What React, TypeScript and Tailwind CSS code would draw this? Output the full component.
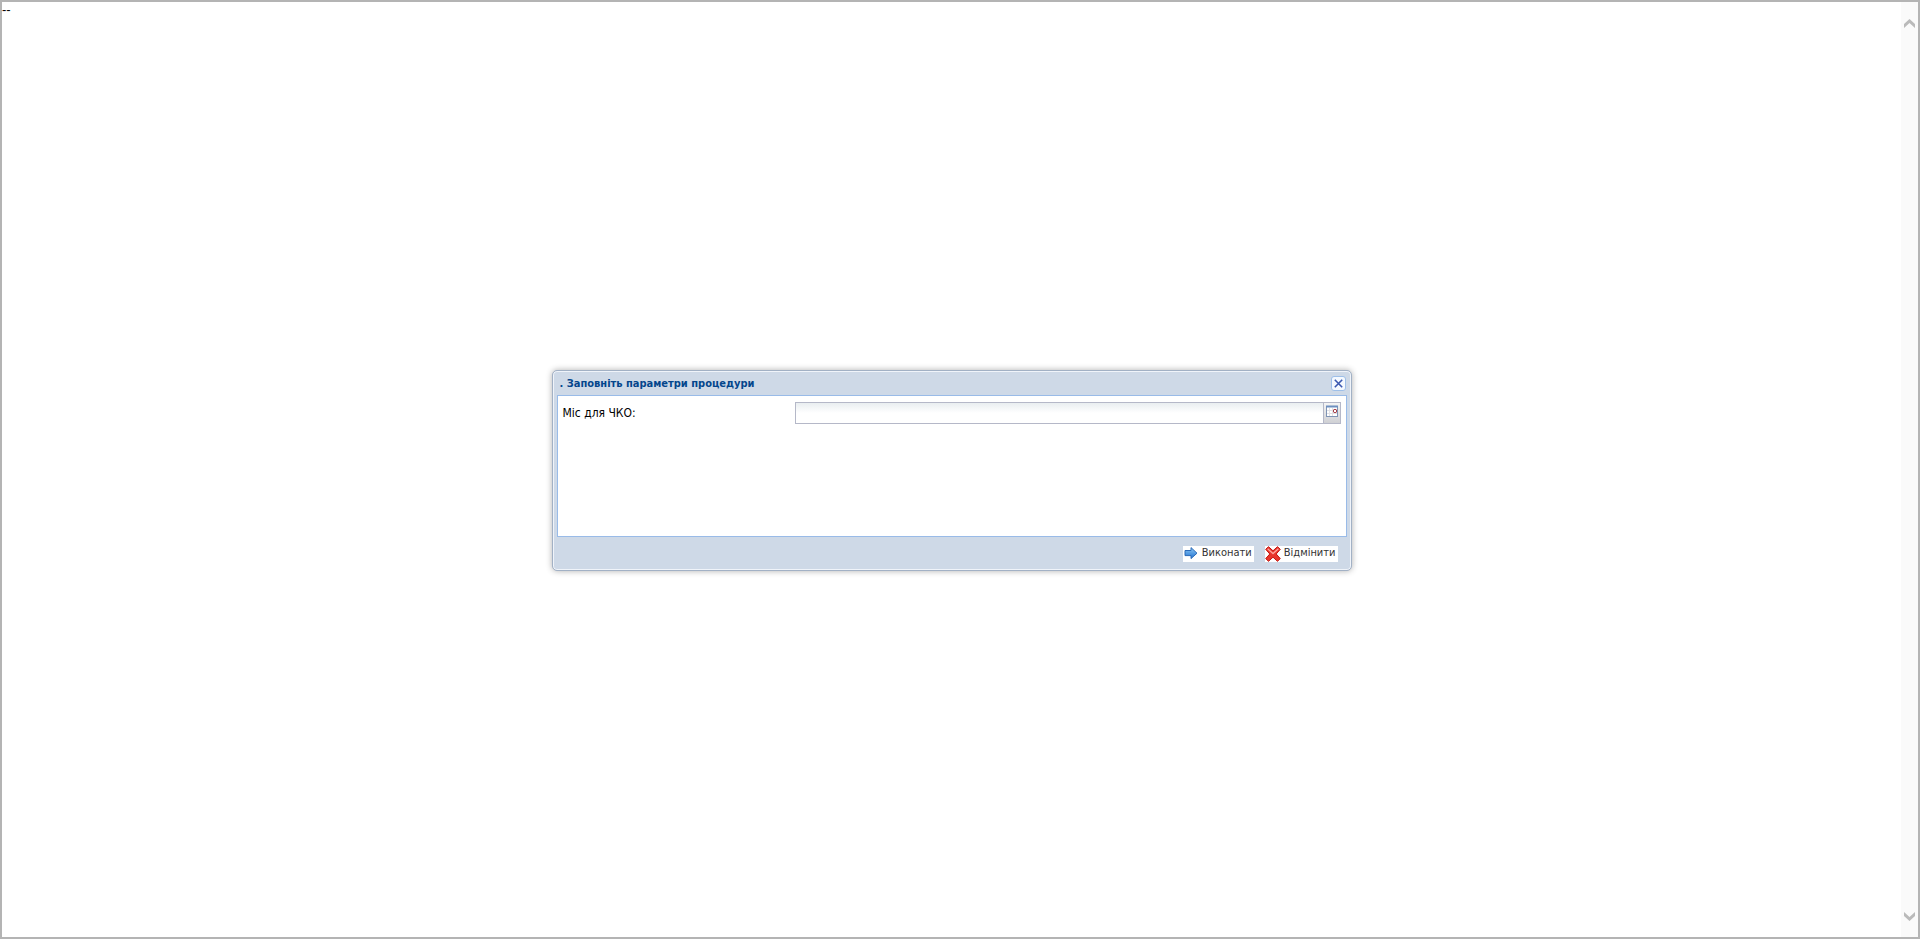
import { useState } from "react";

function ArrowIcon() {
  return (
    <svg width="16" height="16" viewBox="0 0 16 16" aria-hidden="true">
      <defs>
        <linearGradient id="arrow-fill" x1="0" y1="0" x2="0" y2="1">
          <stop offset="0" stopColor="#8cc8f4" />
          <stop offset="1" stopColor="#2273d2" />
        </linearGradient>
      </defs>
      <path d="M2 4.5h6V1.6L14 7.2 8 12.6v-3H2z" fill="url(#arrow-fill)" stroke="#2a6ab8" />
    </svg>
  );
}

function CrossIcon() {
  return (
    <svg width="16" height="16" viewBox="0 0 16 16" aria-hidden="true">
      <path
        d="M3.5.7 8 4.8 12.5.7l2.8 2.6L11.2 8l4.1 4.6-2.8 2.7L8 11.2l-4.5 4.1-2.8-2.7L4.8 8 .7 3.3z"
        fill="#e8352c"
        stroke="#c4150f"
      />
      <path d="M2.6 2.8 8 7.6l5.4-4.8" fill="none" stroke="#ffa39a" strokeWidth="1.3" />
    </svg>
  );
}

function CalendarIcon() {
  return (
    <svg width="16" height="19" viewBox="0 0 16 19" aria-hidden="true">
      <rect x="2.5" y="3.5" width="11" height="10" fill="#fff" stroke="#7f93b4" />
      <path d="M2 3.5h12" stroke="#6d8fbf" strokeWidth="2" />
      <path d="M3 7.5h10M3 10.5h10M5.5 5v8M8.5 5v8" stroke="#e2e2e6" />
      <rect x="9.5" y="6.5" width="3" height="3" rx="1" fill="#fff" stroke="#8f0a14" />
    </svg>
  );
}

function Chevron({ down = false }: { down?: boolean }) {
  return (
    <svg width="11" height="9" viewBox="0 0 11 9" aria-hidden="true">
      <path
        d={down ? "M0 0 5.5 5 11 0v4L5.5 9 0 4z" : "M0 9 5.5 4 11 9V5L5.5 0 0 5z"}
        fill="#bababa"
      />
    </svg>
  );
}

export default function App() {
  const [date, setDate] = useState("");
  return (
    <div className="flex h-screen border-2 border-[#b4b4b4] bg-white font-['DejaVu_Sans_Condensed','DejaVu_Sans',sans-serif] text-black">
      <main className="relative flex min-w-0 flex-1 items-center justify-center pt-px">
        <span className="absolute top-0 left-0 font-['Liberation_Sans',sans-serif] text-[13px] leading-4">--</span>
        <section
          role="dialog"
          aria-labelledby="dialog-title"
          className="flex w-[800px] flex-col rounded-[5px] border border-[#a2b1c5] bg-[#ced9e7] px-1 pb-1 shadow-[inset_0_0_0_1px_#f0f4fa,0_0_6px_#b0b0b0]"
        >
          <header className="flex h-6 items-center justify-between pt-[2px] pr-px pl-[3px]">
            <h1 id="dialog-title" className="text-[11px] leading-4 font-bold text-[#04468c]">
              . Заповніть параметри процедури
            </h1>
            <button
              type="button"
              aria-label="Закрити"
              className="flex size-[15px] items-center justify-center rounded-[3px] border border-[#9ebfe8] bg-[#f4f9ff]"
            >
              <svg width="9" height="9" viewBox="0 0 9 9" aria-hidden="true">
                <path d="m.8.8 7.4 7.4M8.2.8.8 8.2" stroke="#3a58b0" strokeWidth="1.6" />
              </svg>
            </button>
          </header>
          <div className="h-[142px] border border-[#99bbe8] bg-white px-[5px] pt-[6px]">
            <div className="flex items-center">
              <label htmlFor="date" className="w-[232px] text-xs">
                Міс для ЧКО:
              </label>
              <div className="flex h-[22px] flex-1 border border-[#b5b8c8]">
                <input
                  id="date"
                  value={date}
                  onChange={(e) => setDate(e.target.value)}
                  className="min-w-0 flex-1 bg-linear-to-b from-[#e9eef0] to-white to-50% px-1 text-xs outline-none"
                />
                <button
                  type="button"
                  aria-label="Вибрати дату"
                  className="flex w-[17px] items-center border-l border-[#b5b8c8] bg-linear-to-b from-[#f4f4f4] to-[#cfd0d4]"
                >
                  <CalendarIcon />
                </button>
              </div>
            </div>
          </div>
          <footer className="flex h-[29px] items-center justify-end gap-[11px] pt-[5px] pr-[9px] text-[11px] text-[#333]">
            <button type="button" className="flex h-4 items-center gap-[3px] bg-white pr-[2px]">
              <ArrowIcon />
              Виконати
            </button>
            <button type="button" className="flex h-4 items-center gap-[3px] bg-white pr-[2px]">
              <CrossIcon />
              Відмінити
            </button>
          </footer>
        </section>
      </main>
      <div className="flex w-[17px] flex-col items-center justify-between bg-[#fafafa] pt-[17px] pb-4">
        <Chevron />
        <Chevron down />
      </div>
    </div>
  );
}
